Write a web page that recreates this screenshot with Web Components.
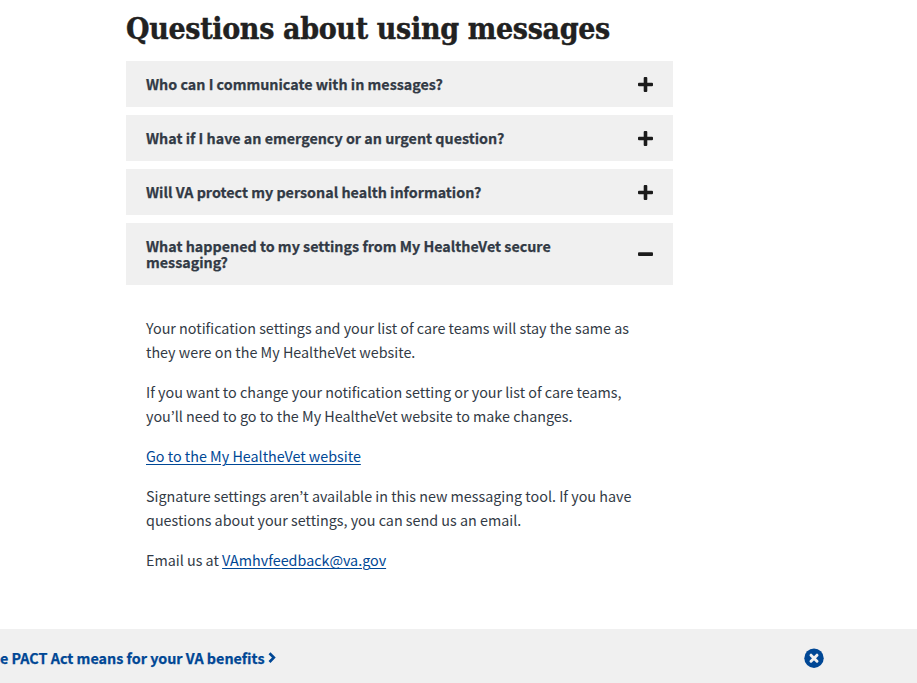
<!DOCTYPE html>
<html lang="en">
<head>
<meta charset="utf-8">
<title>Questions about using messages</title>
<style>
html, body { margin: 0; background: #fff; }
body { height: 683px; overflow: hidden; color: #323a45; font-family: "Noto Sans CJK KR", "Noto Sans", sans-serif; font-size: 14.33px; line-height: 24px; }
</style>
</head>
<body>
<faq-page></faq-page>
<script>
class FaqIcon extends HTMLElement {
  connectedCallback() {
    const shapes = {
      plus: '<svg width="15" height="15" viewBox="0 0 15 15"><path fill="#1b1b1b" d="M6.700 0h1.600q1 0 1 1v4.800H14q1 0 1 1v1.400q0 1-1 1H9.300V14q0 1-1 1H6.700q-1 0-1-1V9.200H1q-1 0-1-1V6.800q0-1 1-1h4.700V1q0-1 1-1z"/></svg>',
      minus: '<svg width="15" height="15" viewBox="0 0 15 15"><rect y="5.300" width="15" height="3.600" rx="1" fill="#1b1b1b"/></svg>',
      chevron: '<svg width="8" height="12" viewBox="0 0 8 12"><path d="M1.500 1.300 5.800 5.600l-4.300 4.400" fill="none" stroke="#004795" stroke-width="2.700"/></svg>',
      close: '<svg width="20" height="20" viewBox="0 0 20 20"><circle cx="10" cy="10.200" r="9.700" fill="#004795"/><path d="m7 7.200 6 6m0-6-6 6" stroke="#f0f0f0" stroke-width="3" stroke-linecap="round"/></svg>'
    };
    this.attachShadow({ mode: 'open' }).innerHTML = `<style>:host{display:block;flex:none}svg{display:block}</style>${shapes[this.getAttribute('name')]}`;
  }
}
customElements.define('faq-icon', FaqIcon);

class FaqHeading extends HTMLElement {
  connectedCallback() {
    this.attachShadow({ mode: 'open' }).innerHTML = `<style>
      :host{display:block;height:61px;padding-top:8px;box-sizing:border-box}
      h2{margin:0;color:#212121;font:bold 30px/42px "DejaVu Serif Condensed","DejaVu Serif",serif;font-stretch:condensed;white-space:nowrap;letter-spacing:-.34px;-webkit-text-stroke:.4px #212121}
      </style><h2><slot></slot></h2>`;
  }
}
customElements.define('faq-heading', FaqHeading);

class FaqItem extends HTMLElement {
  connectedCallback() {
    const open = this.hasAttribute('open');
    this.attachShadow({ mode: 'open' }).innerHTML = `<style>
      :host{display:block}
      button{all:unset;box-sizing:border-box;display:flex;width:100%;align-items:center;justify-content:space-between;background:#f0f0f0;padding:15px 20px;font-weight:700;font-size:14.3px;line-height:16px;-webkit-text-stroke:.25px;cursor:pointer}
      .label{max-width:450px}
      .body{padding:31px 20px 0}
      </style><button aria-expanded="${open}"><span class="label"><slot name="title"></slot></span><faq-icon name="${open ? 'minus' : 'plus'}"></faq-icon></button>
      ${open ? '<div class="body"><slot></slot></div>' : ''}`;
  }
}
customElements.define('faq-item', FaqItem);

class PromoBar extends HTMLElement {
  connectedCallback() {
    this.attachShadow({ mode: 'open' }).innerHTML = `<style>
      :host{display:flex;box-sizing:border-box;height:54px;background:#f0f0f0;align-items:center;justify-content:space-between;padding:4px 93px 0 0;color:#004795;font-weight:700;-webkit-text-stroke:.25px}
      .link{display:flex;align-items:center;gap:3px;white-space:nowrap}
      </style><span class="link"><slot></slot><faq-icon name="chevron"></faq-icon></span><faq-icon name="close"></faq-icon>`;
  }
}
customElements.define('promo-bar', PromoBar);

class FaqPage extends HTMLElement {
  connectedCallback() {
    this.attachShadow({ mode: 'open' }).innerHTML = `<style>
      :host{display:flex;flex-direction:column;height:683px}
      main{flex:1;width:547px;margin-left:126px}
      .list{display:grid;gap:8px}
      p{margin:0 0 16px}
      a{color:#004795;text-decoration:underline;text-decoration-thickness:1px;text-underline-offset:2px}
      </style>
      <main><faq-heading>Questions about using messages</faq-heading>
      <div class="list">
      <faq-item><span slot="title">Who can I communicate with in messages?</span></faq-item>
      <faq-item><span slot="title">What if I have an emergency or an urgent question?</span></faq-item>
      <faq-item><span slot="title">Will VA protect my personal health information?</span></faq-item>
      <faq-item open><span slot="title">What happened to my settings from My HealtheVet secure messaging?</span>
        <p>Your notification settings and your list of care teams will stay the same as<br>they were on the My HealtheVet website.</p>
        <p>If you want to change your notification setting or your list of care teams,<br>you’ll need to go to the My HealtheVet website to make changes.</p>
        <p><a href="#">Go to the My HealtheVet website</a></p>
        <p>Signature settings aren’t available in this new messaging tool. If you have<br>questions about your settings, you can send us an email.</p>
        <p>Email us at <a href="#">VAmhvfeedback@va.gov</a></p>
      </faq-item>
      </div></main>
      <promo-bar>e PACT Act means for your VA benefits</promo-bar>`;
  }
}
customElements.define('faq-page', FaqPage);
</script>
</body>
</html>
